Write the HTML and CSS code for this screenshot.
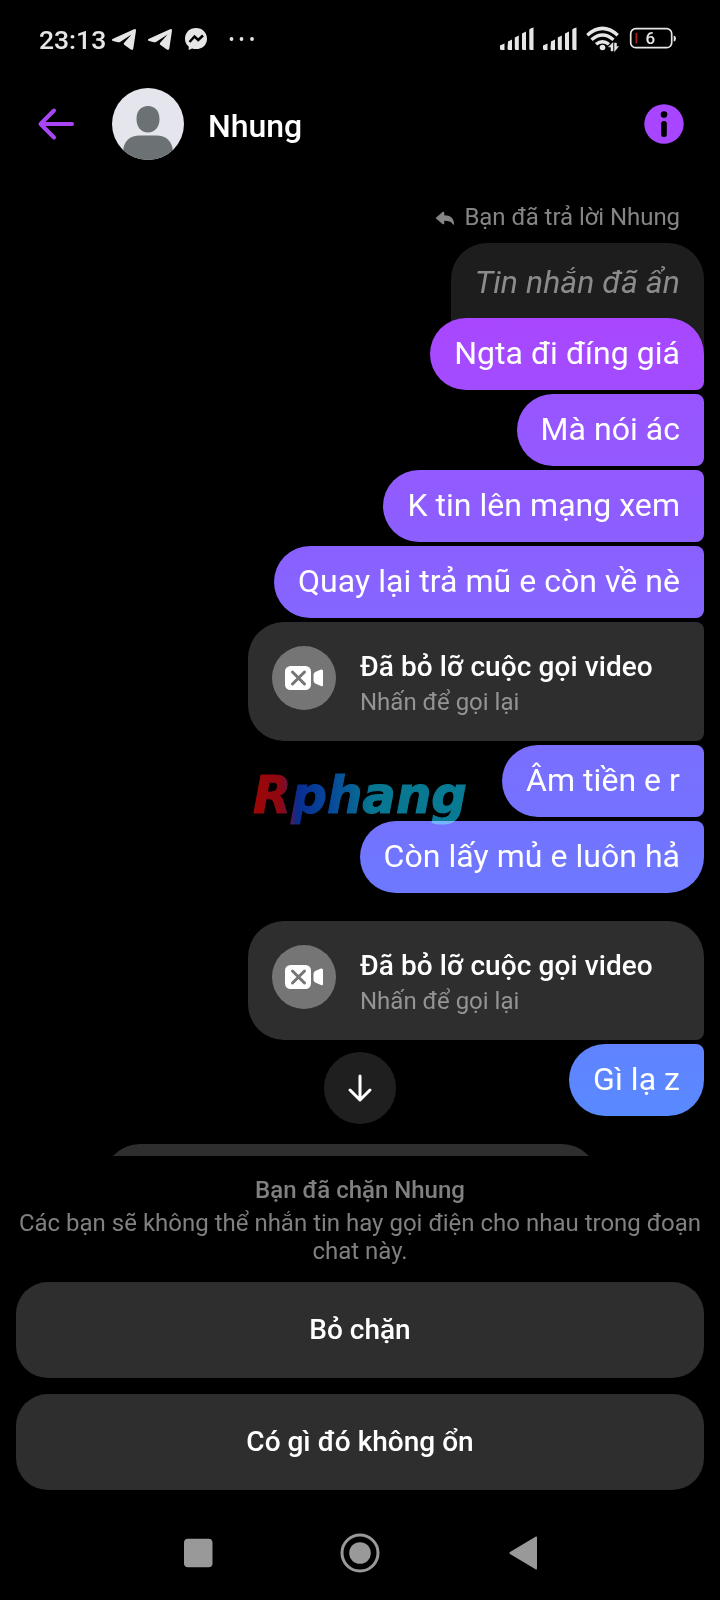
FILE: index.html
```html
<!DOCTYPE html>
<html lang="vi">
<head>
<meta charset="utf-8">
<title>Nhung</title>
<link rel="stylesheet" href="styles.css">
</head>
<body>
<div class="phone">
  <div class="status">
    <span class="clock">23:13</span>
    <svg class="status-apps" width="150" height="30" viewBox="0 0 150 30" fill="#e6e6e6">
      <path id="plane" d="M3 14.800 24 5.200q2.300-1 2 1.500L23.300 24.500q-.5 2.200-2.500 1L14.200 20.700Q13.200 19.700 14.200 18.700L21.500 10.500 10 18Q9 18.500 8 18.200L3 17Q.8 16 3 14.800Z"/>
      <use href="#plane" x="36"/>
      <path d="M86 4C79.500 4 75 8.700 75 14.700c0 3.300 1.400 5.900 3.700 7.800V26l3.400-1.600c1.200.5 2.500.7 3.900.7 6.500 0 11-4.500 11-10.400S92.500 4 86 4Z"/>
      <path d="m79.500 18 5-5.500 3.700 3.500 4.800-4.500" fill="none" stroke="#000" stroke-width="2.500"/>
      <circle cx="121.500" cy="15" r="1.900"/><circle cx="131.500" cy="15" r="1.900"/><circle cx="142" cy="15" r="1.900"/>
    </svg>
    <svg class="status-system" width="178" height="30" viewBox="0 0 178 30" fill="#e6e6e6">
      <g id="bars"><path d="M0 21.500 4.500 19.500V26H1.500Q0 26 0 24.500ZM8 17.500 12 15.500V26H9Q7.500 26 7.500 24.500ZM14.800 13.500 18.800 11.500V26H16.300Q14.800 26 14.800 24.500ZM22 9.500 26 7.500V26H23.500Q22 26 22 24.500ZM29.300 5.500Q30.500 4 33.500 3.500V26H30.800Q29.300 26 29.300 24.500Z"/></g>
      <use href="#bars" x="43"/>
      <g fill="none" stroke="#e6e6e6" stroke-width="3.400"><path d="M87.300 11.200Q102.500-2.500 117.700 11.200M91.500 15.800Q102.500 6.300 113.500 15.800M96 20.300Q102.500 15 109 20.300"/></g>
      <circle cx="102.500" cy="23.500" r="2.800"/>
      <path d="M108.500 23 113 18.500V27H111V23ZM118.500 22.500 114.500 27.500V19H116.500V22.500Z" stroke="#e6e6e6" stroke-width=".5"/>
      <rect x="130.700" y="4.700" width="41" height="19" rx="5" fill="none" stroke="#e6e6e6" stroke-width="1.700"/>
      <rect x="135.500" y="9" width="1.800" height="10.500" fill="#a51f18"/>
      <path d="M173.700 11.500q2.300.5 2.300 3t-2.300 3Z"/>
      <text class="battery-text" x="145.500" y="20.300">6</text>
    </svg>
  </div>

  <header class="header">
    <svg class="back" width="40" height="40" viewBox="0 0 40 40" fill="none" stroke="#a846f5" stroke-width="4" stroke-linecap="round" stroke-linejoin="round"><path d="M18 6.500 4.500 20 18 33.500M5 20H36"/></svg>
    <svg class="avatar" width="72" height="72" viewBox="0 0 72 72">
      <clipPath id="face"><circle cx="36" cy="36" r="36"/></clipPath>
      <g clip-path="url(#face)"><rect width="72" height="72" fill="#e5e5ed"/>
      <path fill="#6c7273" d="M36 18C43 18 47.500 23 47.500 31S43 44.500 36 44.500 24.500 39 24.500 31 29 18 36 18ZM11 65C11 53 18 47.500 28 47.500H44C54 47.500 61 53 61 65V72H11Z"/></g>
    </svg>
    <h1 class="name">Nhung</h1>
    <svg class="info" width="40" height="40" viewBox="0 0 40 40"><circle cx="20" cy="20" r="19.700" fill="#a846ff"/><circle cx="20" cy="10.600" r="3.300"/><rect x="17.200" y="17" width="5.600" height="16" rx="2.500"/></svg>
  </header>

  <main class="chat">
    <div class="reply-label">
      <svg width="20" height="16" viewBox="0 0 20 16" fill="#858585"><path d="M1.200 6.500 7.500 1Q9.200 0 9.300 2V4.200C15.500 4.200 19 7.500 19 12.500 19 14.500 18 14 17.500 12.800 16 10.500 13.500 9.800 9.300 9.800V12Q9.200 14 7.500 13L1.200 7.800Q.5 7.100 1.200 6.500Z"/></svg>
      <span>Bạn đã trả lời Nhung</span>
    </div>
    <div class="hidden-message">Tin nhắn đã ẩn</div>
    <div class="bubble tone-1 first">Ngta đi đíng giá</div>
    <div class="bubble tone-2">Mà nói ác</div>
    <div class="bubble tone-3">K tin lên mạng xem</div>
    <div class="bubble tone-4">Quay lại trả mũ e còn về nè</div>
    <div class="call">
      <svg class="call-icon" width="64" height="64" viewBox="0 0 64 64"><circle cx="32" cy="32" r="32" fill="#757575"/><rect x="13" y="20" width="26" height="24" rx="5.500" fill="#fff"/><path d="M43.200 26 49 23.500Q51 23 51 25V39Q51 41 49 40L43.200 37.500Q41.500 36.500 41.500 34.500V29Q41.500 27 43.200 26Z" fill="#fff"/><path d="m20.500 26 12 12m0-12-12 12" stroke="#757575" stroke-width="3" stroke-linecap="round"/></svg>
      <div><div class="call-title">Đã bỏ lỡ cuộc gọi video</div><div class="call-sub">Nhấn để gọi lại</div></div>
    </div>
    <div class="bubble tone-5">Âm tiền e r</div>
    <div class="bubble tone-6 last">Còn lấy mủ e luôn hả</div>
    <div class="call group-start">
      <svg class="call-icon" width="64" height="64" viewBox="0 0 64 64"><circle cx="32" cy="32" r="32" fill="#757575"/><rect x="13" y="20" width="26" height="24" rx="5.500" fill="#fff"/><path d="M43.200 26 49 23.500Q51 23 51 25V39Q51 41 49 40L43.200 37.500Q41.500 36.500 41.500 34.500V29Q41.500 27 43.200 26Z" fill="#fff"/><path d="m20.500 26 12 12m0-12-12 12" stroke="#757575" stroke-width="3" stroke-linecap="round"/></svg>
      <div><div class="call-title">Đã bỏ lỡ cuộc gọi video</div><div class="call-sub">Nhấn để gọi lại</div></div>
    </div>
    <div class="bubble tone-7 last">Gì lạ z</div>
    <div class="incoming"></div>
    <svg class="scroll-down" width="72" height="72" viewBox="0 0 72 72"><circle cx="36" cy="36" r="36" fill="#1f1f1f"/><path d="M36 24V48M26 38 36 48 46 38" fill="none" stroke="#fff" stroke-width="3" stroke-linecap="round" stroke-linejoin="round"/></svg>
    <svg class="watermark" width="240" height="84" viewBox="0 -10 240 84">
      <defs><linearGradient id="brand" gradientUnits="userSpaceOnUse" x1="8" y1="0" x2="222" y2="0"><stop offset="0" stop-color="#9d0707"/><stop offset=".12" stop-color="#8e0712"/><stop offset=".16" stop-color="#5b1946"/><stop offset=".2" stop-color="#082d91"/><stop offset=".35" stop-color="#07489b"/><stop offset=".55" stop-color="#087690"/><stop offset="1" stop-color="#087b95"/></linearGradient></defs>
      <text class="brand-text" x="6" y="42.500" textLength="214" lengthAdjust="spacingAndGlyphs" fill="url(#brand)" stroke="url(#brand)">Rphang</text>
    </svg>
  </main>

  <section class="blocked">
    <h2 class="blocked-title">Bạn đã chặn Nhung</h2>
    <p class="blocked-text">Các bạn sẽ không thể nhắn tin hay gọi điện cho nhau trong đoạn chat này.</p>
    <button class="action">Bỏ chặn</button>
    <button class="action">Có gì đó không ổn</button>
  </section>

  <nav class="nav">
    <svg width="40" height="40" viewBox="0 0 40 40" fill="#999"><rect x="6" y="5.700" width="28.500" height="28.500" rx="4"/></svg>
    <svg width="40" height="40" viewBox="0 0 40 40" fill="#999"><circle cx="20" cy="20" r="18" fill="none" stroke="#999" stroke-width="3"/><circle cx="20" cy="20" r="10.800"/></svg>
    <svg width="40" height="40" viewBox="0 0 40 40" fill="#999"><path d="M8 19 33.500 3.800Q35 3 35 4.800V35.200Q35 37 33.500 36.200L8 21Q6.500 20 8 19Z"/></svg>
  </nav>
</div>
</body>
</html>
```
FILE: styles.css
```css
* { box-sizing: border-box; }
body { margin: 0; background: #000; font-family: Roboto, "Noto Sans", sans-serif; color: #fff; }
svg { display: block; flex: none; }
h1, h2, p { margin: 0; font-weight: 500; }
.phone { width: 720px; height: 1600px; display: flex; flex-direction: column; overflow: hidden; background: #000; }

.status { height: 78px; flex: none; display: flex; align-items: center; padding: 0 42px 0 39px; color: #e6e6e6; }
.clock { width: 71px; margin-top: 2px; font-size: 26.5px; font-weight: 500; line-height: 32px; white-space: nowrap; }
.status-system { margin-left: auto; }
.battery-text { font-size: 17px; font-weight: 500; fill: #e6e6e6; }

.header { height: 92px; flex: none; display: flex; align-items: center; padding: 0 36px; }
.back { margin-right: 36px; }
.name { flex: 1; margin: 4px 0 0 24px; font-size: 32px; line-height: 36px; }

.chat { position: relative; height: 986px; flex: none; overflow: hidden; display: flex; flex-direction: column; align-items: flex-end; padding: 32px 16px 0; }
.reply-label { display: flex; align-items: center; gap: 9px; height: 30px; margin: 0 24px 11px 0; color: #858585; font-size: 24px; letter-spacing: -.06px; line-height: 30px; white-space: nowrap; }
.reply-label svg { margin-top: 4px; }
.hidden-message { height: 115px; flex: none; padding: 20px 24px; border-radius: 36px 36px 0 0; background: #1d1d1d; color: #8b8b8b; font-size: 32px; font-style: italic; letter-spacing: .06px; line-height: 38px; white-space: nowrap; }
.bubble { height: 72px; flex: none; margin-bottom: 4px; padding: 16px 24px; border-radius: 36px 8px 8px 36px; font-size: 32px; letter-spacing: .04px; line-height: 38px; white-space: nowrap; }
.first { margin-top: -40px; border-top-right-radius: 36px; }
.last { border-bottom-right-radius: 36px; }
.tone-1 { background: linear-gradient(#a847ff, #a24cff); }
.tone-2 { background: linear-gradient(#9855ff, #9459ff); }
.tone-3 { background: linear-gradient(#925aff, #8c5fff); }
.tone-4 { background: linear-gradient(#8a60ff, #8566ff); }
.tone-5 { background: linear-gradient(#7a6eff, #7572ff); }
.tone-6 { background: linear-gradient(#7372ff, #6d79ff); }
.tone-7 { background: linear-gradient(#6083ff, #5989ff); }

.call { width: 456px; height: 119px; flex: none; margin-bottom: 4px; display: flex; gap: 24px; padding: 24px; border-radius: 36px 8px 8px 36px; background: #2e2e2e; white-space: nowrap; }
.call-title { margin-top: 4px; font-size: 28px; font-weight: 500; letter-spacing: .09px; line-height: 34px; }
.call-sub { margin-top: 4px; font-size: 24px; line-height: 28px; color: #949494; }
.group-start { margin-top: 24px; border-top-right-radius: 36px; }
.incoming { align-self: flex-start; width: 494px; height: 119px; flex: none; margin: 24px 0 0 88px; border-radius: 36px; background: #2e2e2e; }
.scroll-down { position: absolute; left: 324px; top: 882px; }
.watermark { position: absolute; left: 247px; top: 590px; mix-blend-mode: screen; }
.brand-text { font-family: "DejaVu Sans", sans-serif; font-size: 51px; font-weight: 700; font-style: italic; stroke-width: 1.2px; }

.blocked { flex: none; display: flex; flex-direction: column; padding: 19px 16px 0; text-align: center; }
.blocked-title { font-size: 24px; line-height: 30px; color: #808080; }
.blocked-text { margin: 4px -8px 17px; font-size: 24px; font-weight: 400; line-height: 28px; color: #808080; }
.action { height: 96px; margin: 0 0 16px; padding: 0; border: 0; border-radius: 32px; background: #2e2e2e; color: #fff; font: 500 28px/34px Roboto, "Noto Sans", sans-serif; }
.nav { display: flex; justify-content: space-between; padding: 27px 178px 0; }
```
